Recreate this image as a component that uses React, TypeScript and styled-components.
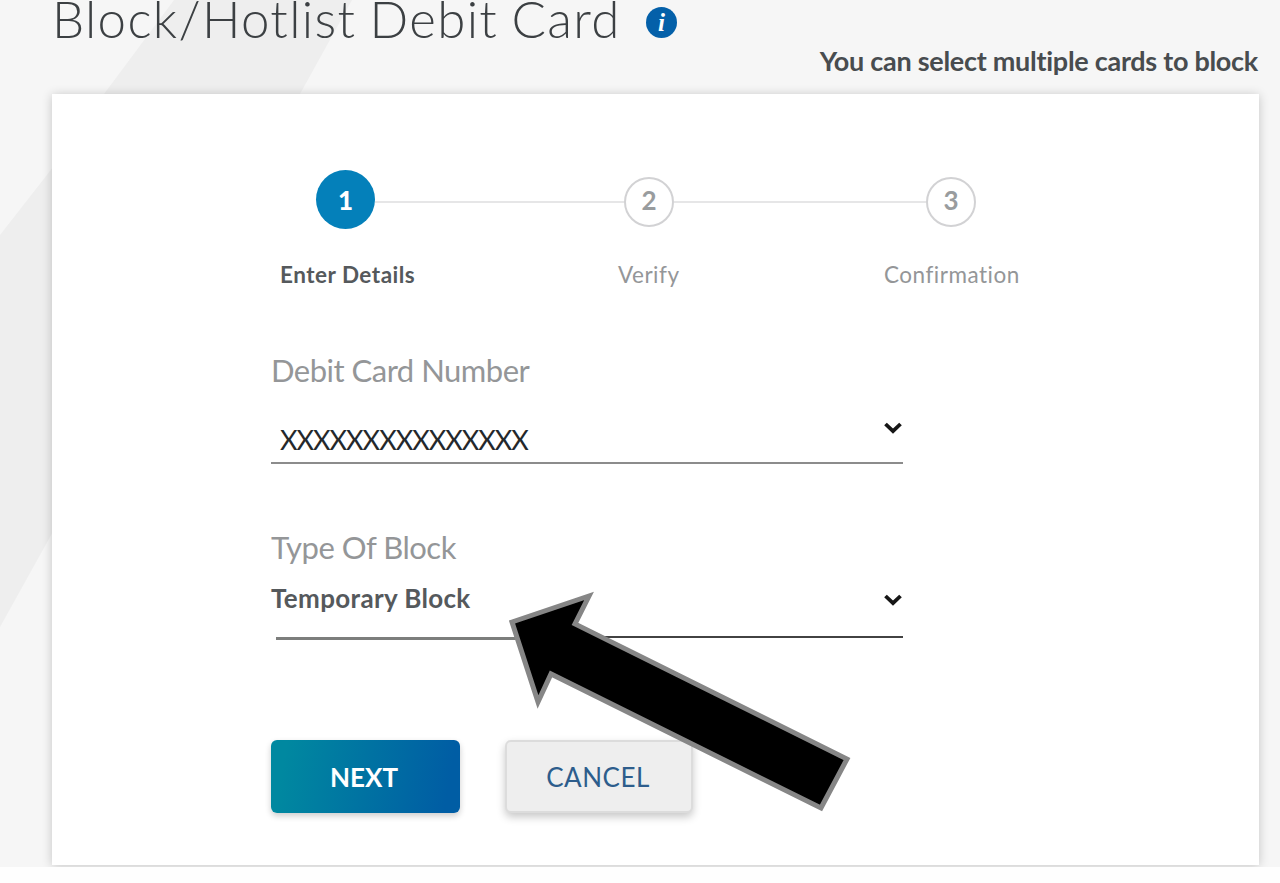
import styled, { createGlobalStyle } from 'styled-components';

const GlobalStyle = createGlobalStyle`
	* {
		box-sizing: border-box;
	}

	body {
		margin: 0;
		background: #fefefe;
		font-family: Lato, 'Liberation Sans', sans-serif;
		overflow: hidden;
	}
`;

const Page = styled.div`
	position: relative;
	width: 1280px;
	height: 867px;
	padding: 0 21px 0 52px;
	background: #f6f6f6;
	overflow: hidden;
`;

const Backdrop = styled.svg`
	position: absolute;
	top: 0;
	left: 0;
`;

const Header = styled.header`
	position: relative;
	display: flex;
	justify-content: space-between;
	height: 94px;
`;

const TitleGroup = styled.div`
	display: flex;
	align-items: flex-start;
`;

const Title = styled.h1`
	width: 594px;
	margin: 0;
	color: #3c4043;
	font-size: 51px;
	font-weight: 300;
	line-height: 37px;
	letter-spacing: 1.35px;
	word-spacing: -2px;
	white-space: nowrap;
`;

const InfoBadge = styled.span`
	display: flex;
	align-items: center;
	justify-content: center;
	width: 31px;
	height: 31px;
	margin-top: 7px;
	border-radius: 50%;
	background: #0460a9;
	color: #fff;
	font-family: 'Liberation Serif', serif;
	font-size: 25px;
	font-style: italic;
	font-weight: 700;
	line-height: 31px;
`;

const Hint = styled.p`
	margin: 45px 1px 0 0;
	color: #484c4f;
	font-size: 27px;
	font-weight: 700;
	line-height: 32px;
	letter-spacing: -0.28px;
	white-space: nowrap;
`;

const Card = styled.main`
	position: relative;
	height: 771px;
	padding: 76px 356px 0 219px;
	background: #fff;
	box-shadow: 0 1px 10px rgba(0, 0, 0, 0.2);
`;

const Stepper = styled.ol`
	display: flex;
	align-items: center;
	width: 660px;
	height: 60px;
	margin: 0 0 0 45px;
	padding: 0;
	list-style: none;
`;

const StepCircle = styled.li<{ $active?: boolean }>`
	display: flex;
	flex: none;
	align-items: center;
	justify-content: center;
	width: ${({ $active }) => ($active ? 59 : 50)}px;
	height: ${({ $active }) => ($active ? 59 : 50)}px;
	margin-top: ${({ $active }) => ($active ? -1 : 3)}px;
	padding-bottom: ${({ $active }) => ($active ? 0 : 3)}px;
	border: ${({ $active }) => ($active ? 'none' : '2px solid #d2d2d4')};
	border-radius: 50%;
	background: ${({ $active }) => ($active ? '#0480ba' : '#fff')};
	color: ${({ $active }) => ($active ? '#fff' : '#999c9e')};
	font-size: 26px;
	font-weight: ${({ $active }) => ($active ? 900 : 700)};
`;

const StepLine = styled.li<{ $width: number }>`
	width: ${({ $width }) => $width}px;
	height: 2px;
	margin-top: 3px;
	background: #e6e6e7;
`;

const StepLabels = styled.div`
	display: grid;
	grid-template-columns: 338px 266px 140px;
	height: 30px;
	margin: 30px 0 0 9px;
`;

const StepLabel = styled.span<{ $active?: boolean }>`
	color: ${({ $active }) => ($active ? '#55595c' : '#949698')};
	font-size: 22.5px;
	font-weight: ${({ $active }) => ($active ? 700 : 400)};
	line-height: 30px;
	letter-spacing: 0.5px;
	white-space: nowrap;
`;

const Field = styled.div`
	width: 632px;
`;

const CardField = styled(Field)`
	height: 113px;
	margin-top: 61px;
	border-bottom: 2px solid #8c8c8c;
`;

const BlockField = styled(Field)`
	height: 109px;
	margin-top: 64px;
`;

const FieldLabel = styled.label`
	display: block;
	height: 40px;
	color: #949698;
	font-size: 31px;
	line-height: 38px;
	letter-spacing: -0.5px;
	white-space: nowrap;
`;

const SelectRow = styled.div`
	display: flex;
	justify-content: space-between;
`;

const CardNumber = styled.span`
	margin: 32px 0 0 9px;
	color: #24282b;
	font-size: 27px;
	line-height: 34px;
	letter-spacing: -1px;
`;

const BlockType = styled.span`
	margin-top: 13px;
	color: #55595c;
	font-size: 26px;
	font-weight: 700;
	line-height: 34px;
	letter-spacing: 0.35px;
`;

const Chevron = styled.svg<{ $top: number }>`
	flex: none;
	width: 20px;
	height: 14px;
	margin-top: ${({ $top }) => $top}px;
`;

const Underline = styled.div`
	display: flex;
	height: 4px;
	margin: 21px 0 0 5px;
`;

const UnderlineStart = styled.span`
	width: 242px;
	height: 3px;
	margin-top: 1px;
	background: #7c7e7c;
`;

const UnderlineEnd = styled.span`
	flex: 1;
	height: 2px;
	background: #424242;
`;

const Actions = styled.div`
	display: flex;
	gap: 45px;
	margin-top: 103px;
`;

const Button = styled.button`
	height: 73px;
	padding: 0;
	border: none;
	border-radius: 6px;
	font-family: inherit;
	font-size: 26px;
	line-height: 32px;
`;

const NextButton = styled(Button)`
	width: 189px;
	padding-right: 3px;
	background: linear-gradient(100deg, #0088a0 8%, #005da4 92%);
	box-shadow: 0 3px 6px rgba(0, 0, 0, 0.2);
	color: #fff;
	font-weight: 700;
`;

const CancelButton = styled(Button)`
	width: 188px;
	padding-right: 2px;
	border: 2px solid #dcdcdc;
	background: #eeeeee;
	box-shadow: 0 4px 8px rgba(0, 0, 0, 0.22);
	color: #2d5d8c;
	letter-spacing: 0.5px;
`;

const Pointer = styled.svg`
	position: absolute;
	top: 0;
	left: 0;
	pointer-events: none;
`;

const ChevronDown = ({ top }: { top: number }) => (
	<Chevron $top={top} viewBox="0 0 20 14">
		<path d="M2.5 3 L10 10.2 L17.5 3" fill="none" stroke="#161616" strokeWidth="3.8" />
	</Chevron>
);

const App = () => (
	<>
		<GlobalStyle />
		<Page>
			<Backdrop width="1280" height="867">
				<path d="M174 0 L104 94 L50 171 L0 235 V627 L50 537 L300 94 L352 0 Z" fill="#eeeeee" />
			</Backdrop>
			<Header>
				<TitleGroup>
					<Title>Block/Hotlist Debit Card</Title>
					<InfoBadge>i</InfoBadge>
				</TitleGroup>
				<Hint>You can select multiple cards to block</Hint>
			</Header>
			<Card>
				<Stepper>
					<StepCircle $active>1</StepCircle>
					<StepLine $width={249} />
					<StepCircle>2</StepCircle>
					<StepLine $width={252} />
					<StepCircle>3</StepCircle>
				</Stepper>
				<StepLabels>
					<StepLabel $active>Enter Details</StepLabel>
					<StepLabel>Verify</StepLabel>
					<StepLabel>Confirmation</StepLabel>
				</StepLabels>
				<CardField>
					<FieldLabel>Debit Card Number</FieldLabel>
					<SelectRow>
						<CardNumber>XXXXXXXXXXXXXXX</CardNumber>
						<ChevronDown top={30} />
					</SelectRow>
				</CardField>
				<BlockField>
					<FieldLabel>Type Of Block</FieldLabel>
					<SelectRow>
						<BlockType>Temporary Block</BlockType>
						<ChevronDown top={25} />
					</SelectRow>
					<Underline>
						<UnderlineStart />
						<UnderlineEnd />
					</Underline>
				</BlockField>
				<Actions>
					<NextButton>NEXT</NextButton>
					<CancelButton>CANCEL</CancelButton>
				</Actions>
			</Card>
			<Pointer width="1280" height="867">
				<path
					d="M512 622 L589 596 L575 624 L847 759 L821 808 L551 674 L538 702 Z"
					fill="#000"
					stroke="#868686"
					strokeWidth="5"
				/>
			</Pointer>
		</Page>
	</>
);

export default App;
